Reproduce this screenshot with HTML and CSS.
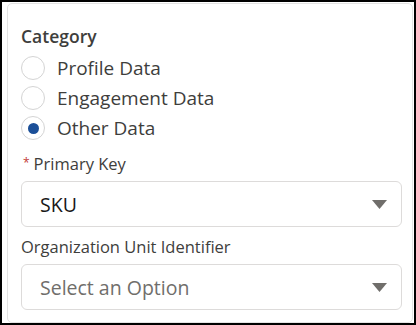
FILE: index.html
```html
<!DOCTYPE html>
<html lang="en">
<head>
    <meta charset="UTF-8">
    <meta name="viewport" content="width=device-width, initial-scale=1.0">
    <title>Category</title>
    <link rel="stylesheet" href="styles.css">
</head>
<body>
    <div class="frame">
        <div class="card">
            <div class="group-title">Category</div>
            <div class="radio-list">
                <div class="radio-row">
                    <span class="radio"></span>
                    <span class="radio-label">Profile Data</span>
                </div>
                <div class="radio-row">
                    <span class="radio"></span>
                    <span class="radio-label">Engagement Data</span>
                </div>
                <div class="radio-row">
                    <span class="radio checked"></span>
                    <span class="radio-label">Other Data</span>
                </div>
            </div>

            <div class="field">
                <div class="field-label"><span class="required">*</span>Primary Key</div>
                <div class="select">
                    <span class="select-value">SKU</span>
                    <svg class="select-arrow" width="15" height="9" viewBox="0 0 15 9">
                        <path d="M0 0 H15 L7.5 9 Z" fill="#706e6b"/>
                    </svg>
                </div>
            </div>

            <div class="field">
                <div class="field-label">Organization Unit Identifier</div>
                <div class="select">
                    <span class="select-value placeholder">Select an Option</span>
                    <svg class="select-arrow" width="15" height="9" viewBox="0 0 15 9">
                        <path d="M0 0 H15 L7.5 9 Z" fill="#706e6b"/>
                    </svg>
                </div>
            </div>
        </div>
    </div>
</body>
</html>
```

FILE: styles.css
```css
body {
    margin: 0;
    font-family: "Open Sans", "Noto Sans", sans-serif;
    background-color: #ffffff;
}
.frame {
    width: 416px;
    height: 325px;
    box-sizing: border-box;
    border: 2px solid #000000;
    display: flex;
    flex-direction: column;
    overflow: hidden;
}
.card {
    flex: 1;
    margin: 1px 1px 0 5px;
    padding: 20px 10px 0 13px;
    border: 1px solid #e3e3e3;
    border-radius: 5px;
}
.group-title {
    font-size: 17.5px;
    font-weight: 600;
    line-height: 24px;
    color: #3e3e3c;
}
.radio-list {
    margin-top: 5px;
}
.radio-row {
    display: flex;
    align-items: center;
    height: 30px;
}
.radio {
    width: 22px;
    height: 22px;
    border: 1px solid #d4d4d4;
    border-radius: 50%;
    display: flex;
    align-items: center;
    justify-content: center;
    margin-right: 12px;
}
.radio.checked::after {
    content: "";
    width: 11px;
    height: 11px;
    border-radius: 50%;
    background-color: #1b4f98;
}
.radio-label {
    font-size: 19px;
    line-height: 30px;
    color: #3e3e3c;
}
.field {
    margin-top: 8px;
}
.field-label {
    font-size: 16.5px;
    line-height: 24px;
    color: #3e3e3c;
    margin-bottom: 5px;
}
.required {
    color: #c23934;
    font-size: 12px;
    margin: 0 4px 0 2px;
    vertical-align: 3px;
}
.select {
    height: 46px;
    box-sizing: border-box;
    border: 1px solid #dddbda;
    border-radius: 6px;
    display: flex;
    align-items: center;
    justify-content: space-between;
    padding: 0 14px 0 18px;
}
.select-value {
    font-size: 19.5px;
    color: #181818;
}
.select-value.placeholder {
    color: #706e6b;
}
```
